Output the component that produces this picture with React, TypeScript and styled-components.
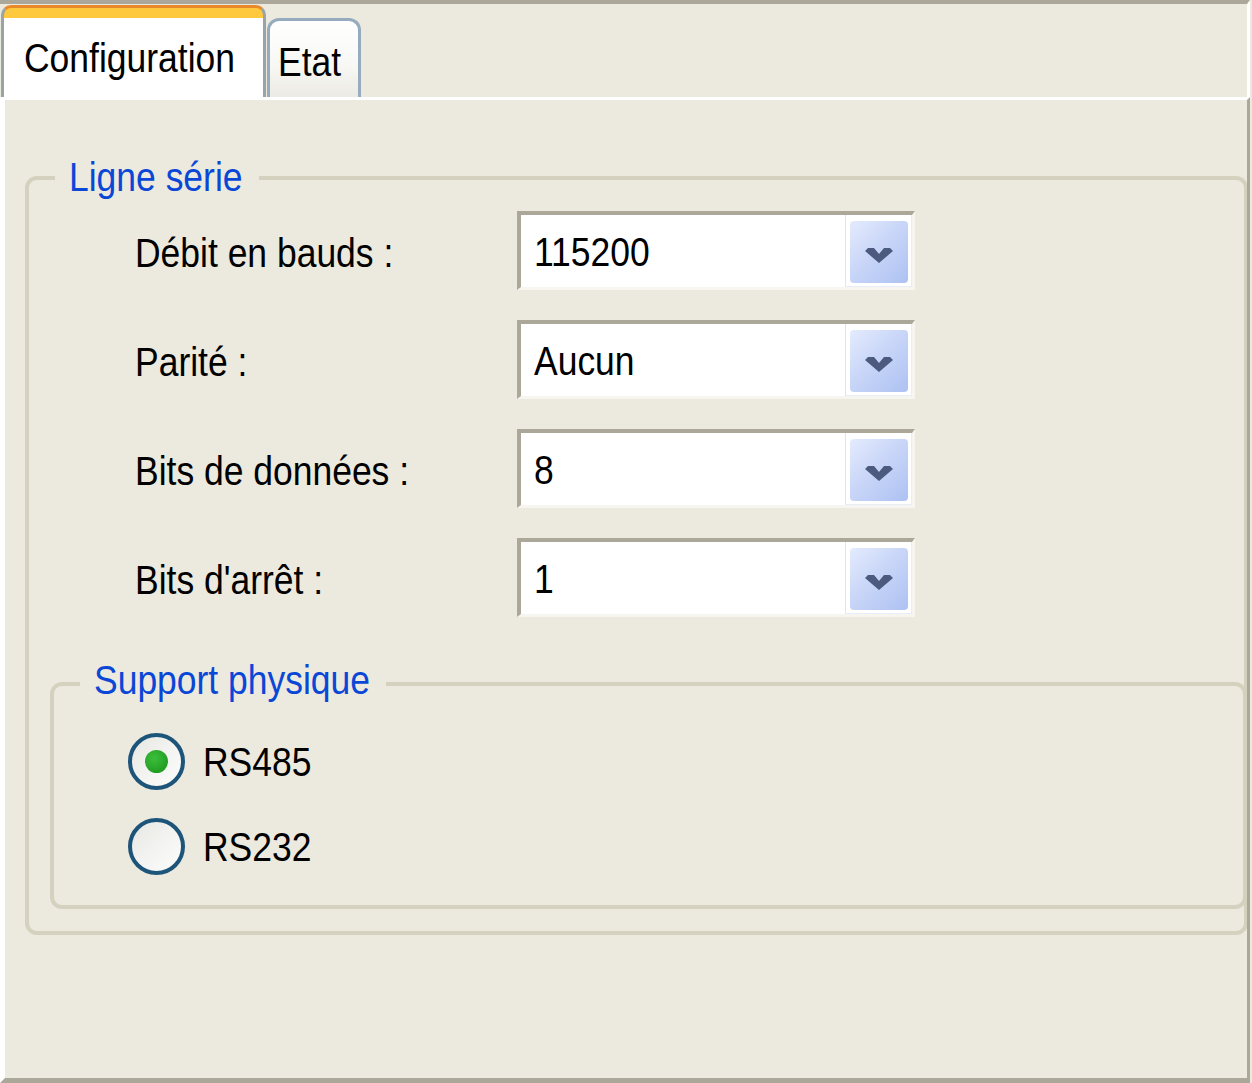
import React from "react";
import styled, { createGlobalStyle } from "styled-components";

const Global = createGlobalStyle`
  html, body { margin: 0; padding: 0; background: #ece9de; }
  body { font-family: "Liberation Sans", Arial, sans-serif; }
  * { box-sizing: border-box; }
`;

const Window = styled.div`
  width: 1250px;
  height: 1083px;
  display: flex;
  flex-direction: column;
  background: #ece9de;
`;

const TabStrip = styled.div`
  height: 97px;
  flex: none;
  display: flex;
  align-items: flex-end;
  padding-left: 1px;
  border-top: 4px solid #aca899;
  border-right: 3px solid #ffffff;
`;

const Tab = styled.div<{ $active?: boolean }>`
  position: relative;
  z-index: 1;
  height: ${(p) => (p.$active ? 92 : 79)}px;
  width: ${(p) => (p.$active ? 265 : 94)}px;
  margin-left: ${(p) => (p.$active ? 0 : 1)}px;
  border-style: solid;
  border-width: 3px 3px 0 3px;
  border-color: ${(p) =>
    p.$active ? "#e88a2c #9aa3a8 #9aa3a8 #9aa3a8" : "#97abbf"};
  border-radius: ${(p) => (p.$active ? "10px 10px 0 0" : "12px 12px 0 0")};
  background: ${(p) =>
    p.$active
      ? "linear-gradient(to bottom, #ffc93e 0, #ffc93e 10px, #ffffff 10px)"
      : "linear-gradient(to bottom, #ffffff 0%, #f7f7f4 60%, #ebeae4 100%)"};
  padding: ${(p) => (p.$active ? "30px 0 0 20px" : "21px 0 0 8px")};
`;

const Txt = styled.span<{ $color?: string }>`
  display: inline-block;
  font-size: 41px;
  line-height: 41px;
  white-space: nowrap;
  color: ${(p) => p.$color || "#000000"};
  transform: scaleX(0.865);
  transform-origin: left center;
`;

const Panel = styled.div`
  flex: 1;
  overflow: hidden;
  border-top: 3px solid #ffffff;
  border-left: 5px solid #ffffff;
  border-right: 3px solid #aca899;
  border-bottom: 5px solid #aca899;
`;

const Group = styled.fieldset<{ $outer?: boolean }>`
  margin: ${(p) => (p.$outer ? "57px -1px 0 20px" : "43px -3px 0 21px")};
  padding: ${(p) => (p.$outer ? "13px 0 22px 0" : "25px 0 30px 0")};
  border: 4px solid #d4d1bf;
  border-radius: 12px;
  min-width: 0;
`;

const Legend = styled.legend<{ $w: number; $pb?: number }>`
  margin-left: 26px;
  padding: 0 16px ${(p) => p.$pb || 0}px 14px;
  width: ${(p) => p.$w + 30}px;
  overflow: visible;
  white-space: nowrap;
`;

const Rows = styled.div`
  display: flex;
  flex-direction: column;
  gap: 30px;
  padding-left: 106px;
`;

const Row = styled.div`
  display: flex;
  align-items: center;
`;

const Label = styled.div`
  width: 382px;
  flex: none;
  padding-top: 5px;
`;

const Combo = styled.div`
  width: 398px;
  height: 79px;
  display: flex;
  background: #ffffff;
  border-style: solid;
  border-width: 4px 3px 3px 4px;
  border-color: #aca899 #f6f5f0 #f6f5f0 #aca899;
`;

const ComboValue = styled.div`
  flex: 1;
  display: flex;
  align-items: center;
  padding: 3px 0 0 13px;
`;

const ButtonWell = styled.div`
  width: 67px;
  flex: none;
  border-left: 1px solid #dfe4f0;
  border-right: 1px solid #e9edf7;
  border-bottom: 1px solid #e9edf7;
  padding: 6px 3px 3px 4px;
`;

const DropButton = styled.div`
  width: 100%;
  height: 100%;
  border-radius: 4px;
  background: linear-gradient(135deg, #e4ebfd 0%, #c9d6f8 45%, #adc1f2 100%);
  display: flex;
  align-items: center;
  justify-content: center;
  padding-top: 7px;
`;

const RadioList = styled.div`
  display: flex;
  flex-direction: column;
  gap: 28px;
  padding-left: 74px;
`;

const RadioRow = styled.div`
  display: flex;
  align-items: center;
  gap: 18px;
`;

const RadioCircle = styled.div`
  width: 57px;
  height: 57px;
  border-radius: 50%;
  border: 4px solid #1d5479;
  background: linear-gradient(135deg, #e6e6e2 0%, #f3f3f1 50%, #fcfcfc 100%);
  display: flex;
  align-items: center;
  justify-content: center;
`;

const RadioDot = styled.div`
  width: 23px;
  height: 23px;
  border-radius: 50%;
  background: radial-gradient(circle at 40% 35%, #3cbf3c 0%, #26a326 60%, #17901a 100%);
`;

const RadioText = styled.div`
  padding-top: 2px;
`;

const Chevron = () => (
  <svg width="28" height="15" viewBox="0 0 28 15">
    <path d="M0 3 L3 0 H9 L14 6 L19 0 H25 L28 3 L14 15 Z" fill="#4b5a7e" />
  </svg>
);

const fields = [
  { label: "Débit en bauds :", value: "115200" },
  { label: "Parité :", value: "Aucun" },
  { label: "Bits de données :", value: "8" },
  { label: "Bits d'arrêt :", value: "1" },
];

const radios = [
  { label: "RS485", checked: true },
  { label: "RS232", checked: false },
];

export default function App() {
  return (
    <>
      <Global />
      <Window>
        <TabStrip>
          <Tab $active>
            <Txt>Configuration</Txt>
          </Tab>
          <Tab>
            <Txt>Etat</Txt>
          </Tab>
        </TabStrip>
        <Panel>
          <Group $outer>
            <Legend $w={174}>
              <Txt $color="#0a47d6">Ligne série</Txt>
            </Legend>
            <Rows>
              {fields.map((f) => (
                <Row key={f.label}>
                  <Label>
                    <Txt>{f.label}</Txt>
                  </Label>
                  <Combo>
                    <ComboValue>
                      <Txt>{f.value}</Txt>
                    </ComboValue>
                    <ButtonWell>
                      <DropButton>
                        <Chevron />
                      </DropButton>
                    </ButtonWell>
                  </Combo>
                </Row>
              ))}
            </Rows>
            <Group>
              <Legend $w={276} $pb={7}>
                <Txt $color="#0a47d6">Support physique</Txt>
              </Legend>
              <RadioList>
                {radios.map((r) => (
                  <RadioRow key={r.label}>
                    <RadioCircle>{r.checked && <RadioDot />}</RadioCircle>
                    <RadioText>
                      <Txt>{r.label}</Txt>
                    </RadioText>
                  </RadioRow>
                ))}
              </RadioList>
            </Group>
          </Group>
        </Panel>
      </Window>
    </>
  );
}
